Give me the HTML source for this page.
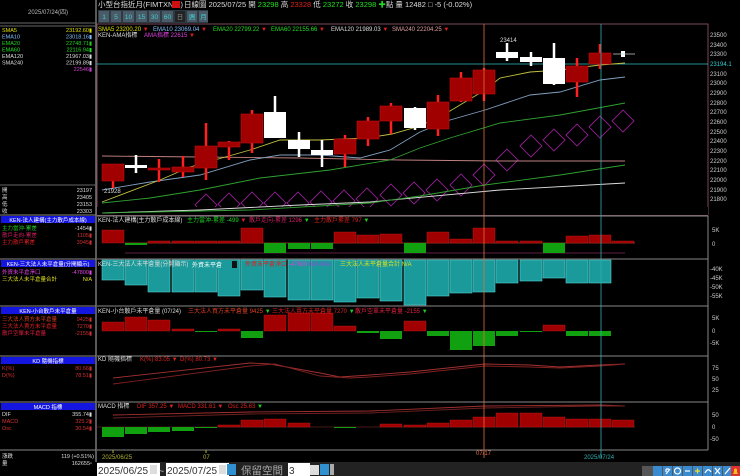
<!DOCTYPE html>
<html><head><meta charset="utf-8"><style>
html,body{margin:0;padding:0;background:#000;width:740px;height:476px;overflow:hidden}
svg{display:block}
text{font-family:"Liberation Sans","Noto Sans CJK TC",sans-serif}
</style></head><body>
<svg width="740" height="476" viewBox="0 0 740 476" xmlns="http://www.w3.org/2000/svg">
<rect width="740" height="476" fill="#000"/>
<!-- left panel -->
<line x1="96" y1="0" x2="96" y2="462" stroke="#777" stroke-width="1.5"/>
<line x1="0" y1="23" x2="96" y2="23" stroke="#666"/>
<text x="48" y="14" font-size="6" fill="#bbb" text-anchor="middle">2025/07/24(四)</text>
<line x1="0" y1="26" x2="96" y2="26" stroke="#666"/>
<g font-size="5.5">
<text x="2" y="32" fill="#e0e000">SMA5</text><text x="92" y="32" fill="#e0e000" text-anchor="end">23192.60▮</text>
<text x="2" y="38.5" fill="#80c0ff">EMA10</text><text x="92" y="38.5" fill="#80c0ff" text-anchor="end">23018.16▮</text>
<text x="2" y="45" fill="#20d020">EMA20</text><text x="92" y="45" fill="#20d020" text-anchor="end">22748.71▮</text>
<text x="2" y="51.5" fill="#20e020">EMA60</text><text x="92" y="51.5" fill="#20e020" text-anchor="end">22116.94▮</text>
<text x="2" y="58" fill="#ddd">EMA120</text><text x="92" y="58" fill="#ddd" text-anchor="end">21967.03▮</text>
<text x="2" y="64.5" fill="#ddd">SMA240</text><text x="92" y="64.5" fill="#ddd" text-anchor="end">22199.89▮</text>
<text x="92" y="71" fill="#d040d0" text-anchor="end">22546▮</text>
<line x1="0" y1="185" x2="96" y2="185" stroke="#666"/>
<text x="2" y="192" fill="#ddd">開</text><text x="92" y="192" fill="#ddd" text-anchor="end">23197</text>
<text x="2" y="199" fill="#ddd">高</text><text x="92" y="199" fill="#ddd" text-anchor="end">23405</text>
<text x="2" y="206" fill="#ddd">低</text><text x="92" y="206" fill="#ddd" text-anchor="end">23153</text>
<text x="2" y="213" fill="#ddd">收</text><text x="92" y="213" fill="#ddd" text-anchor="end">23303</text>
</g>
<g font-size="5.5">
<line x1="0" y1="215" x2="96" y2="215" stroke="#888"/>
<rect x="1" y="216" width="94" height="7" fill="#1515e0"/>
<text x="48" y="222" fill="#fff" text-anchor="middle">KEN-法人建構(主力散戶成本線)</text>
<text x="2" y="230" fill="#20d020">主力當沖-累差</text><text x="92" y="230" fill="#ddd" text-anchor="end">-1454▮</text>
<text x="2" y="237" fill="#d02060">散戶走向-累差</text><text x="92" y="237" fill="#d03030" text-anchor="end">1105▮</text>
<text x="2" y="244" fill="#e02020">主力散戶累差</text><text x="92" y="244" fill="#d03030" text-anchor="end">3945▮</text>
<line x1="0" y1="259" x2="96" y2="259" stroke="#888"/>
<rect x="1" y="260" width="94" height="7" fill="#1515e0"/>
<text x="48" y="266" fill="#fff" text-anchor="middle">KEN-三大法人未平倉量(分開顯示)</text>
<text x="2" y="274" fill="#e040e0">外資未平倉淨口</text><text x="92" y="274" fill="#e040e0" text-anchor="end">-47800▮</text>
<text x="2" y="281" fill="#e0e020">三大法人未平倉量合計</text><text x="92" y="281" fill="#e0e020" text-anchor="end">N/A</text>
<line x1="0" y1="306" x2="96" y2="306" stroke="#888"/>
<rect x="1" y="307" width="94" height="7" fill="#1515e0"/>
<text x="48" y="313" fill="#fff" text-anchor="middle">KEN-小台散戶未平倉量</text>
<text x="2" y="321" fill="#e04020">三大法人買方未平倉量</text><text x="92" y="321" fill="#d03030" text-anchor="end">9425▮</text>
<text x="2" y="328" fill="#e02020">三大法人賣方未平倉量</text><text x="92" y="328" fill="#d03030" text-anchor="end">7270▮</text>
<text x="2" y="335" fill="#e02040">散戶空單未平倉量</text><text x="92" y="335" fill="#d03030" text-anchor="end">-2155▮</text>
<line x1="0" y1="356" x2="96" y2="356" stroke="#888"/>
<rect x="1" y="357" width="94" height="7" fill="#1515e0"/>
<text x="48" y="363" fill="#fff" text-anchor="middle">KD 隨機指標</text>
<text x="2" y="370" fill="#d03030">K(%)</text><text x="92" y="370" fill="#d03030" text-anchor="end">80.66▮</text>
<text x="2" y="377" fill="#d03030">D(%)</text><text x="92" y="377" fill="#d03030" text-anchor="end">78.51▮</text>
<line x1="0" y1="402" x2="96" y2="402" stroke="#888"/>
<rect x="1" y="403" width="94" height="7" fill="#1515e0"/>
<text x="48" y="409" fill="#fff" text-anchor="middle">MACD 指標</text>
<text x="2" y="416" fill="#ddd">DIF</text><text x="92" y="416" fill="#ddd" text-anchor="end">355.74▮</text>
<text x="2" y="423" fill="#d03030">MACD</text><text x="92" y="423" fill="#d03030" text-anchor="end">325.2▮</text>
<text x="2" y="430" fill="#d03030">Osc</text><text x="92" y="430" fill="#d03030" text-anchor="end">30.54▮</text>
<line x1="0" y1="450" x2="96" y2="450" stroke="#888"/>
<text x="2" y="458" fill="#ddd">漲跌</text><text x="94" y="458" fill="#ddd" text-anchor="end">119 (+0.51%)</text>
<text x="2" y="465" fill="#ddd">量</text><text x="92" y="465" fill="#ddd" text-anchor="end">162655▫</text>
</g>
<!-- header -->
<g font-size="7.5">
<text x="98" y="7" fill="#ddd">小型台指近月(FIMTXN*1)</text>
<rect x="172" y="1" width="8" height="7" fill="#d01010"/>
<text x="184" y="7" fill="#ddd">日線圖  2025/07/25  開 <tspan fill="#20e020">23298</tspan>  高 <tspan fill="#e02020">23328</tspan>  低 <tspan fill="#20e020">23272</tspan>  收 <tspan fill="#20e020">23298</tspan> <tspan fill="#20e020">✚</tspan>點  量 12482 □  -5 (-0.02%)</text>
</g>
<g font-size="6.5" fill="#40d0d0" text-anchor="middle">
<rect x="98" y="10" width="110" height="13" fill="#2c3a44"/>
<rect x="99" y="11" width="10" height="11" fill="#4a5a66"/><text x="104" y="19">1</text>
<rect x="111" y="11" width="10" height="11" fill="#4a5a66"/><text x="116" y="19">5</text>
<rect x="123" y="11" width="11" height="11" fill="#4a5a66"/><text x="128.5" y="19">10</text>
<rect x="136" y="11" width="11" height="11" fill="#4a5a66"/><text x="141.5" y="19">15</text>
<rect x="149" y="11" width="11" height="11" fill="#4a5a66"/><text x="154.5" y="19">30</text>
<rect x="162" y="11" width="11" height="11" fill="#4a5a66"/><text x="167.5" y="19">60</text>
<rect x="175" y="11" width="10" height="11" fill="#222"/><text x="180" y="19" fill="#888">日</text>
<rect x="187" y="11" width="10" height="11" fill="#4a5a66"/><text x="192" y="19">週</text>
<rect x="199" y="11" width="9" height="11" fill="#4a5a66"/><text x="203.5" y="19">月</text>
</g>
<!-- main chart frame -->
<rect x="97" y="24" width="611" height="191" fill="none" stroke="#7a4a5a" stroke-width="1"/>
<g font-size="6">
<text x="98" y="31" fill="#e0e000">SMA5 23200.20 <tspan fill="#e02020">▼</tspan></text>
<text x="153" y="31" fill="#80c0ff">EMA10 23069.04 <tspan fill="#e02020">▼</tspan></text>
<text x="213" y="31" fill="#20e020">EMA20 22799.22 <tspan fill="#e02020">▼</tspan></text>
<text x="271" y="31" fill="#20e020">EMA60 22155.66 <tspan fill="#e02020">▼</tspan></text>
<text x="331" y="31" fill="#ddd">EMA120 21989.03 <tspan fill="#e02020">▼</tspan></text>
<text x="392" y="31" fill="#e0a0a0">SMA240 22204.25 <tspan fill="#e02020">▼</tspan></text>
<text x="98" y="37" fill="#ddd">KEN-AMA指標</text>
<text x="144" y="37" fill="#e040e0">AMA指標 22615 <tspan fill="#e02020">▼</tspan></text>
</g>
<g font-size="6" fill="#ccc">
<text x="710" y="37">23500</text><text x="710" y="47">23400</text><text x="710" y="56">23300</text>
<text x="710" y="76">23100</text><text x="710" y="85">23000</text><text x="710" y="95">22900</text>
<text x="710" y="105">22800</text><text x="710" y="114">22700</text><text x="710" y="124">22600</text>
<text x="710" y="134">22500</text><text x="710" y="143">22400</text><text x="710" y="153">22300</text>
<text x="710" y="163">22200</text><text x="710" y="172">22100</text><text x="710" y="182">22000</text>
<text x="710" y="192">21900</text><text x="710" y="201">21800</text>
<text x="710" y="66" fill="#30d0d0">23194.1</text>
</g>
<line x1="97" y1="64" x2="708" y2="64" stroke="#30c0c0" stroke-width="0.8"/>
<!-- AMA diamonds -->
<g fill="none" stroke="#902090" stroke-width="0.9">
<path d="M195,205 l11,-11 l11,11 l-11,11z M218,204 l11,-11 l11,11 l-11,11z M241,203 l11,-11 l11,11 l-11,11z M264,203 l11,-11 l11,11 l-11,11z M287,203 l11,-11 l11,11 l-11,11z M310,202 l11,-11 l11,11 l-11,11z M333,201 l11,-11 l11,11 l-11,11z M356,199 l11,-11 l11,11 l-11,11z M380,195 l11,-11 l11,11 l-11,11z M403,193 l11,-11 l11,11 l-11,11z M426,190 l11,-11 l11,11 l-11,11z M450,185 l11,-11 l11,11 l-11,11z M473,175 l11,-11 l11,11 l-11,11z M496,160 l11,-11 l11,11 l-11,11z M520,146 l11,-11 l11,11 l-11,11z M543,140 l11,-11 l11,11 l-11,11z M566,135 l11,-11 l11,11 l-11,11z M589,127 l11,-11 l11,11 l-11,11z M612,121 l11,-11 l11,11 l-11,11z"/>
</g>
<rect x="97" y="207" width="611" height="8" fill="#000"/>
<!-- MAs -->
<g fill="none" stroke-width="0.9">
<polyline stroke="#c08080" points="102,156 200,157 300,158 400,160 500,161 625,161"/>
<polyline stroke="#ddd" points="102,213 200,210 300,205 370,202 500,190 625,183"/>
<polyline stroke="#30a030" points="102,213 250,210 370,203 420,196 485,185 560,175 625,165"/>
<polyline stroke="#30a030" points="102,203 150,198 200,190 260,178 330,170 390,160 420,148 450,138 500,123 560,115 625,103"/>
<polyline stroke="#80a0c0" points="102,190 150,182 200,175 250,160 280,155 320,155 360,158 390,150 420,132 450,120 485,110 530,95 560,92 600,80 625,77"/>
<polyline stroke="#c0c040" points="102,202 160,180 190,167 250,150 280,140 320,140 367,138 392,134 420,126 450,111 485,90 500,78 530,72 560,70 600,65 625,63"/>
</g>
<!-- candles -->
<g stroke="#ff2020" stroke-width="2.5">
<path d="M113,164V188 M159,159V182 M183,156V177 M206,123V180 M229,141V160 M252,110V153 M345,135V167 M368,117V146 M391,103V134 M438,95V136 M461,72V102 M484,68V101 M577,58V97 M600,44V69"/>
</g>
<g fill="#a00000" stroke="#c01010" stroke-width="0.6">
<rect x="102" y="164" width="22" height="17"/><rect x="148" y="168" width="22" height="2"/>
<rect x="172" y="167" width="22" height="5"/><rect x="195" y="146" width="22" height="22"/>
<rect x="218" y="142" width="22" height="5"/><rect x="241" y="114" width="22" height="29"/>
<rect x="334" y="139" width="22" height="15"/><rect x="357" y="121" width="22" height="18"/>
<rect x="380" y="106" width="22" height="15"/><rect x="427" y="102" width="22" height="27"/>
<rect x="450" y="78" width="22" height="23"/><rect x="473" y="70" width="22" height="24"/>
<rect x="566" y="66" width="22" height="16"/><rect x="589" y="53" width="22" height="11"/>
</g>
<g stroke="#fff" stroke-width="2.5">
<path d="M136,155V173 M275,96V138 M299,132V157 M322,140V167 M415,107V130 M507,43V61 M531,52V66 M554,43V85"/>
</g>
<g fill="#fff">
<rect x="125" y="165" width="22" height="3"/><rect x="264" y="112" width="22" height="26"/>
<rect x="288" y="140" width="22" height="9"/><rect x="311" y="150" width="22" height="5"/>
<rect x="404" y="108" width="22" height="20"/><rect x="496" y="52" width="22" height="6"/>
<rect x="520" y="57" width="22" height="5"/><rect x="543" y="58" width="22" height="26"/>
<rect x="621" y="51" width="4" height="6"/>
</g>
<line x1="613" y1="54" x2="635" y2="54" stroke="#ccc" stroke-width="0.7"/>
<text x="104" y="193" font-size="6" fill="#ddd">21928</text>
<text x="500" y="42" font-size="6" fill="#ddd">23414</text>
<!-- panel separators -->
<g stroke="#888" stroke-width="1">
<line x1="97" y1="216" x2="708" y2="216"/><line x1="97" y1="259" x2="708" y2="259"/>
<line x1="97" y1="306" x2="708" y2="306"/><line x1="97" y1="356" x2="708" y2="356"/>
<line x1="97" y1="402" x2="708" y2="402"/><line x1="97" y1="450" x2="708" y2="450"/>
<line x1="708" y1="216" x2="708" y2="450"/>
</g>
<!-- panel 2 -->
<line x1="125" y1="253" x2="625" y2="253" stroke="#602040" stroke-width="1"/>
<line x1="125" y1="243" x2="635" y2="243" stroke="#803020" stroke-width="1"/>
<g fill="#a00000" stroke="#c02020" stroke-width="0.4">
<rect x="102" y="230" width="22" height="13"/><rect x="148" y="241" width="22" height="2"/><rect x="172" y="241" width="22" height="2"/><rect x="195" y="241" width="22" height="2"/><rect x="218" y="241" width="22" height="2"/>
<rect x="241" y="228" width="22" height="15"/><rect x="334" y="232" width="22" height="11"/><rect x="357" y="235" width="22" height="8"/><rect x="380" y="234" width="22" height="9"/>
<rect x="427" y="232" width="22" height="11"/><rect x="450" y="239" width="22" height="4"/><rect x="473" y="228" width="22" height="15"/><rect x="496" y="241" width="22" height="2"/><rect x="520" y="241" width="22" height="2"/>
<rect x="566" y="236" width="22" height="7"/><rect x="589" y="235" width="22" height="8"/><rect x="612" y="241" width="22" height="2"/>
</g>
<g fill="#10a010">
<rect x="125" y="243" width="22" height="2"/><rect x="264" y="243" width="22" height="10"/><rect x="288" y="243" width="22" height="6"/><rect x="311" y="243" width="22" height="6"/>
<rect x="404" y="243" width="22" height="10"/><rect x="543" y="243" width="22" height="10"/>
</g>
<g font-size="6">
<text x="98" y="222" fill="#ddd">KEN-法人建構(主力散戶成本線)</text>
<text x="187" y="222" fill="#20d020">主力當沖-累差 -499 <tspan fill="#e02020">▼</tspan></text>
<text x="249" y="222" fill="#d02060">散戶走向-累差 1296 <tspan fill="#20d020">▼</tspan></text>
<text x="314" y="222" fill="#e02020">主力散戶累差 797 <tspan fill="#20d020">▼</tspan></text>
</g>
<g font-size="6" fill="#ccc"><text x="712" y="232">5K</text><text x="712" y="246">0</text></g>
<!-- panel 3 teal -->
<g fill="#1a9a9a" stroke="#50d0d0" stroke-width="0.6">
<rect x="102" y="260" width="22" height="20"/><rect x="125" y="260" width="22" height="25"/><rect x="148" y="260" width="22" height="32"/><rect x="172" y="260" width="22" height="32"/>
<rect x="195" y="260" width="22" height="32"/><rect x="218" y="260" width="22" height="36"/><rect x="241" y="260" width="22" height="30"/><rect x="264" y="260" width="22" height="37"/>
<rect x="288" y="260" width="22" height="40"/><rect x="311" y="260" width="22" height="40"/><rect x="334" y="260" width="22" height="42"/><rect x="357" y="260" width="22" height="38"/>
<rect x="380" y="260" width="22" height="41"/><rect x="404" y="260" width="22" height="45"/><rect x="427" y="260" width="22" height="36"/><rect x="450" y="260" width="22" height="33"/>
<rect x="473" y="260" width="22" height="32"/><rect x="496" y="260" width="22" height="23"/><rect x="520" y="260" width="22" height="21"/><rect x="543" y="260" width="22" height="18"/>
<rect x="566" y="260" width="22" height="23"/><rect x="589" y="260" width="22" height="23"/>
</g>
<g font-size="6">
<text x="98" y="266" fill="#ddd">KEN-三大法人未平倉量(分開顯示)</text>
<rect x="190" y="260" width="48" height="9" fill="#1a9a9a"/>
<text x="192" y="267" fill="#fff">外資未平倉</text>
<rect x="232" y="261" width="5" height="7" fill="#111"/>
<text x="245" y="266" fill="#e02020">外資未平倉淨口 <tspan fill="#e040e0">-47800</tspan> <tspan fill="#a040e0">N/A N/A</tspan></text>
<text x="340" y="266" fill="#e0e020">三大法人未平倉量合計 N/A</text>
</g>
<g font-size="6" fill="#ccc"><text x="710" y="271">-40K</text><text x="710" y="280">-45K</text><text x="710" y="289">-50K</text><text x="710" y="298">-55K</text></g>
<!-- panel 4 -->
<g fill="#a00000" stroke="#c02020" stroke-width="0.4">
<rect x="102" y="322" width="22" height="9"/><rect x="125" y="317" width="22" height="14"/><rect x="148" y="320" width="22" height="11"/><rect x="172" y="329" width="22" height="2"/>
<rect x="218" y="329" width="22" height="2"/><rect x="264" y="315" width="22" height="16"/><rect x="288" y="313" width="22" height="18"/><rect x="311" y="313" width="22" height="18"/>
<rect x="334" y="326" width="22" height="5"/><rect x="404" y="321" width="22" height="10"/><rect x="543" y="325" width="22" height="6"/>
</g>
<g fill="#10a010">
<rect x="195" y="331" width="22" height="1"/><rect x="241" y="331" width="22" height="7"/><rect x="357" y="331" width="22" height="2"/><rect x="380" y="331" width="22" height="8"/>
<rect x="427" y="331" width="22" height="5"/><rect x="450" y="331" width="22" height="19"/><rect x="473" y="331" width="22" height="15"/><rect x="496" y="331" width="22" height="5"/>
<rect x="520" y="331" width="22" height="1"/><rect x="566" y="331" width="22" height="5"/><rect x="589" y="331" width="22" height="5"/>
</g>
<g font-size="6">
<text x="98" y="313" fill="#ddd">KEN-小台散戶未平倉量 (07/24)</text>
<text x="188" y="313" fill="#e04020">三大法人買方未平倉量 9425 <tspan fill="#20d020">▼</tspan></text>
<text x="272" y="313" fill="#e02020">三大法人賣方未平倉量 7270 <tspan fill="#20d020">▼</tspan></text>
<text x="355" y="313" fill="#e02040">散戶空單未平倉量 -2155 <tspan fill="#20d020">▼</tspan></text>
</g>
<g font-size="6" fill="#ccc"><text x="712" y="320">5K</text><text x="712" y="333">0</text><text x="710" y="345">-5K</text></g>
<!-- KD -->
<g fill="none" stroke-width="0.9">
<polyline stroke="#a03030" points="113,378 250,363 270,364 320,373 340,377 370,375 410,372 485,364 530,365 560,367 600,365 625,364"/>
<polyline stroke="#802020" points="113,384 250,366 275,364 320,376 350,378 370,377 410,374 485,366 530,367 560,368 600,366 625,364"/>
</g>
<g font-size="6">
<text x="98" y="361" fill="#ddd">KD 隨機指標</text>
<text x="140" y="361" fill="#e02020">K(%) 83.05 ▼</text>
<text x="180" y="361" fill="#e02020">D(%) 80.73 ▼</text>
</g>
<g font-size="6" fill="#ccc"><text x="712" y="370">75</text><text x="712" y="381">50</text><text x="712" y="392">25</text></g>
<!-- MACD -->
<g fill="none" stroke-width="0.9">
<polyline stroke="#a03030" points="113,415 250,412 370,411 485,406 600,405 625,406"/>
<polyline stroke="#702020" points="113,418 250,414 370,413 485,408 600,406 625,406"/>
</g>
<line x1="97" y1="427" x2="635" y2="427" stroke="#602020" stroke-width="0.8"/>
<g fill="#10a010">
<rect x="102" y="427" width="22" height="10"/><rect x="125" y="427" width="22" height="7"/><rect x="148" y="427" width="22" height="5"/><rect x="172" y="427" width="22" height="4"/><rect x="195" y="427" width="22" height="1"/><rect x="334" y="427" width="22" height="1"/>
</g>
<g fill="#a00000" stroke="#c02020" stroke-width="0.4">
<rect x="218" y="425" width="22" height="2"/><rect x="241" y="420" width="22" height="7"/><rect x="264" y="419" width="22" height="8"/><rect x="288" y="423" width="22" height="4"/>
<rect x="380" y="424" width="22" height="3"/><rect x="404" y="425" width="22" height="2"/><rect x="427" y="423" width="22" height="4"/><rect x="450" y="420" width="22" height="7"/>
<rect x="473" y="417" width="22" height="10"/><rect x="496" y="413" width="22" height="14"/><rect x="520" y="413" width="22" height="14"/><rect x="543" y="417" width="22" height="10"/>
<rect x="566" y="419" width="22" height="8"/><rect x="589" y="419" width="22" height="8"/><rect x="612" y="420" width="22" height="7"/>
</g>
<g font-size="6">
<text x="98" y="408" fill="#ddd">MACD 指標</text>
<text x="137" y="408" fill="#e02020">DIF 357.25 ▼</text>
<text x="178" y="408" fill="#e02020">MACD 331.61 ▼</text>
<text x="228" y="408" fill="#e02020">Osc 25.63 <tspan fill="#20d020">▼</tspan></text>
</g>
<g font-size="6" fill="#ccc"><text x="712" y="417">50</text><text x="712" y="429">0</text><text x="710" y="441">-50</text></g>
<!-- vertical markers -->
<line x1="484" y1="24" x2="484" y2="458" stroke="#e07040" stroke-width="0.8"/>
<line x1="601" y1="24" x2="601" y2="458" stroke="#30b0b0" stroke-width="0.8"/>
<!-- date axis -->
<g font-size="6">
<line x1="113" y1="450" x2="113" y2="453" stroke="#b0b030"/>
<text x="102" y="459" fill="#b0b030">2025/06/25</text>
<line x1="206" y1="450" x2="206" y2="453" stroke="#b0b030"/>
<text x="203" y="459" fill="#b0b030">07</text>
<text x="476" y="455" fill="#e07040">07/17</text>
<text x="584" y="459" fill="#30b0b0">2025/07/24</text>
</g>
<!-- bottom bar -->
<rect x="97" y="462" width="643" height="14" fill="#222"/>
<rect x="97" y="463" width="63" height="13" fill="#fff"/>
<text x="98" y="474" font-size="10" fill="#333">2025/06/25</text>
<rect x="150" y="465" width="7" height="9" fill="#ddd"/>
<text x="159" y="474" font-size="9" fill="#ccc">~</text>
<rect x="166" y="463" width="63" height="13" fill="#fff"/>
<text x="167" y="474" font-size="10" fill="#333">2025/07/25</text>
<rect x="219" y="465" width="7" height="9" fill="#ddd"/>
<rect x="227" y="464" width="9" height="11" fill="#3090d0"/>
<text x="241" y="474" font-size="10.5" fill="#aaa">保留空間</text>
<rect x="288" y="463" width="22" height="13" fill="#fff"/>
<text x="289" y="474" font-size="10" fill="#333">3</text>
<rect x="310" y="465" width="9" height="10" fill="#ddd"/>
<rect x="320" y="464" width="9" height="11" fill="#3090d0"/>
<rect x="330" y="464" width="4" height="11" fill="#aaa"/>
<rect x="642" y="466" width="98" height="10" fill="#555"/>
<g fill="#3a8ad0">
<rect x="653" y="466" width="9" height="10"/><rect x="663" y="466" width="9" height="10"/><rect x="673" y="466" width="9" height="10"/><rect x="683" y="466" width="9" height="10"/>
<rect x="693" y="466" width="9" height="10"/><rect x="703" y="466" width="9" height="10"/><rect x="713" y="466" width="9" height="10"/><rect x="723" y="466" width="8" height="10"/>
</g>
<rect x="731" y="466" width="9" height="10" fill="#e03030"/>
<g stroke="#fff" stroke-width="1.2" fill="none">
<path d="M666,474 l4,-5 M666,469 h3 M666,469 v3"/>
<circle cx="677.5" cy="471" r="3"/>
<path d="M685,471 h5"/>
<path d="M695,471 h5 M697.5,468.5 v5" stroke="#f0e020"/>
<path d="M705,473 q3,-6 6,-1"/>
<path d="M715,468 l5,6 M720,468 l-5,6"/>
<path d="M725,474 l5,-6"/>
</g>
<path d="M733,474 h5 l-1,-2 v-2 a1.5,1.5 0 0 0 -3,0 v2z" fill="#f0c020"/>
</svg>
</body></html>
